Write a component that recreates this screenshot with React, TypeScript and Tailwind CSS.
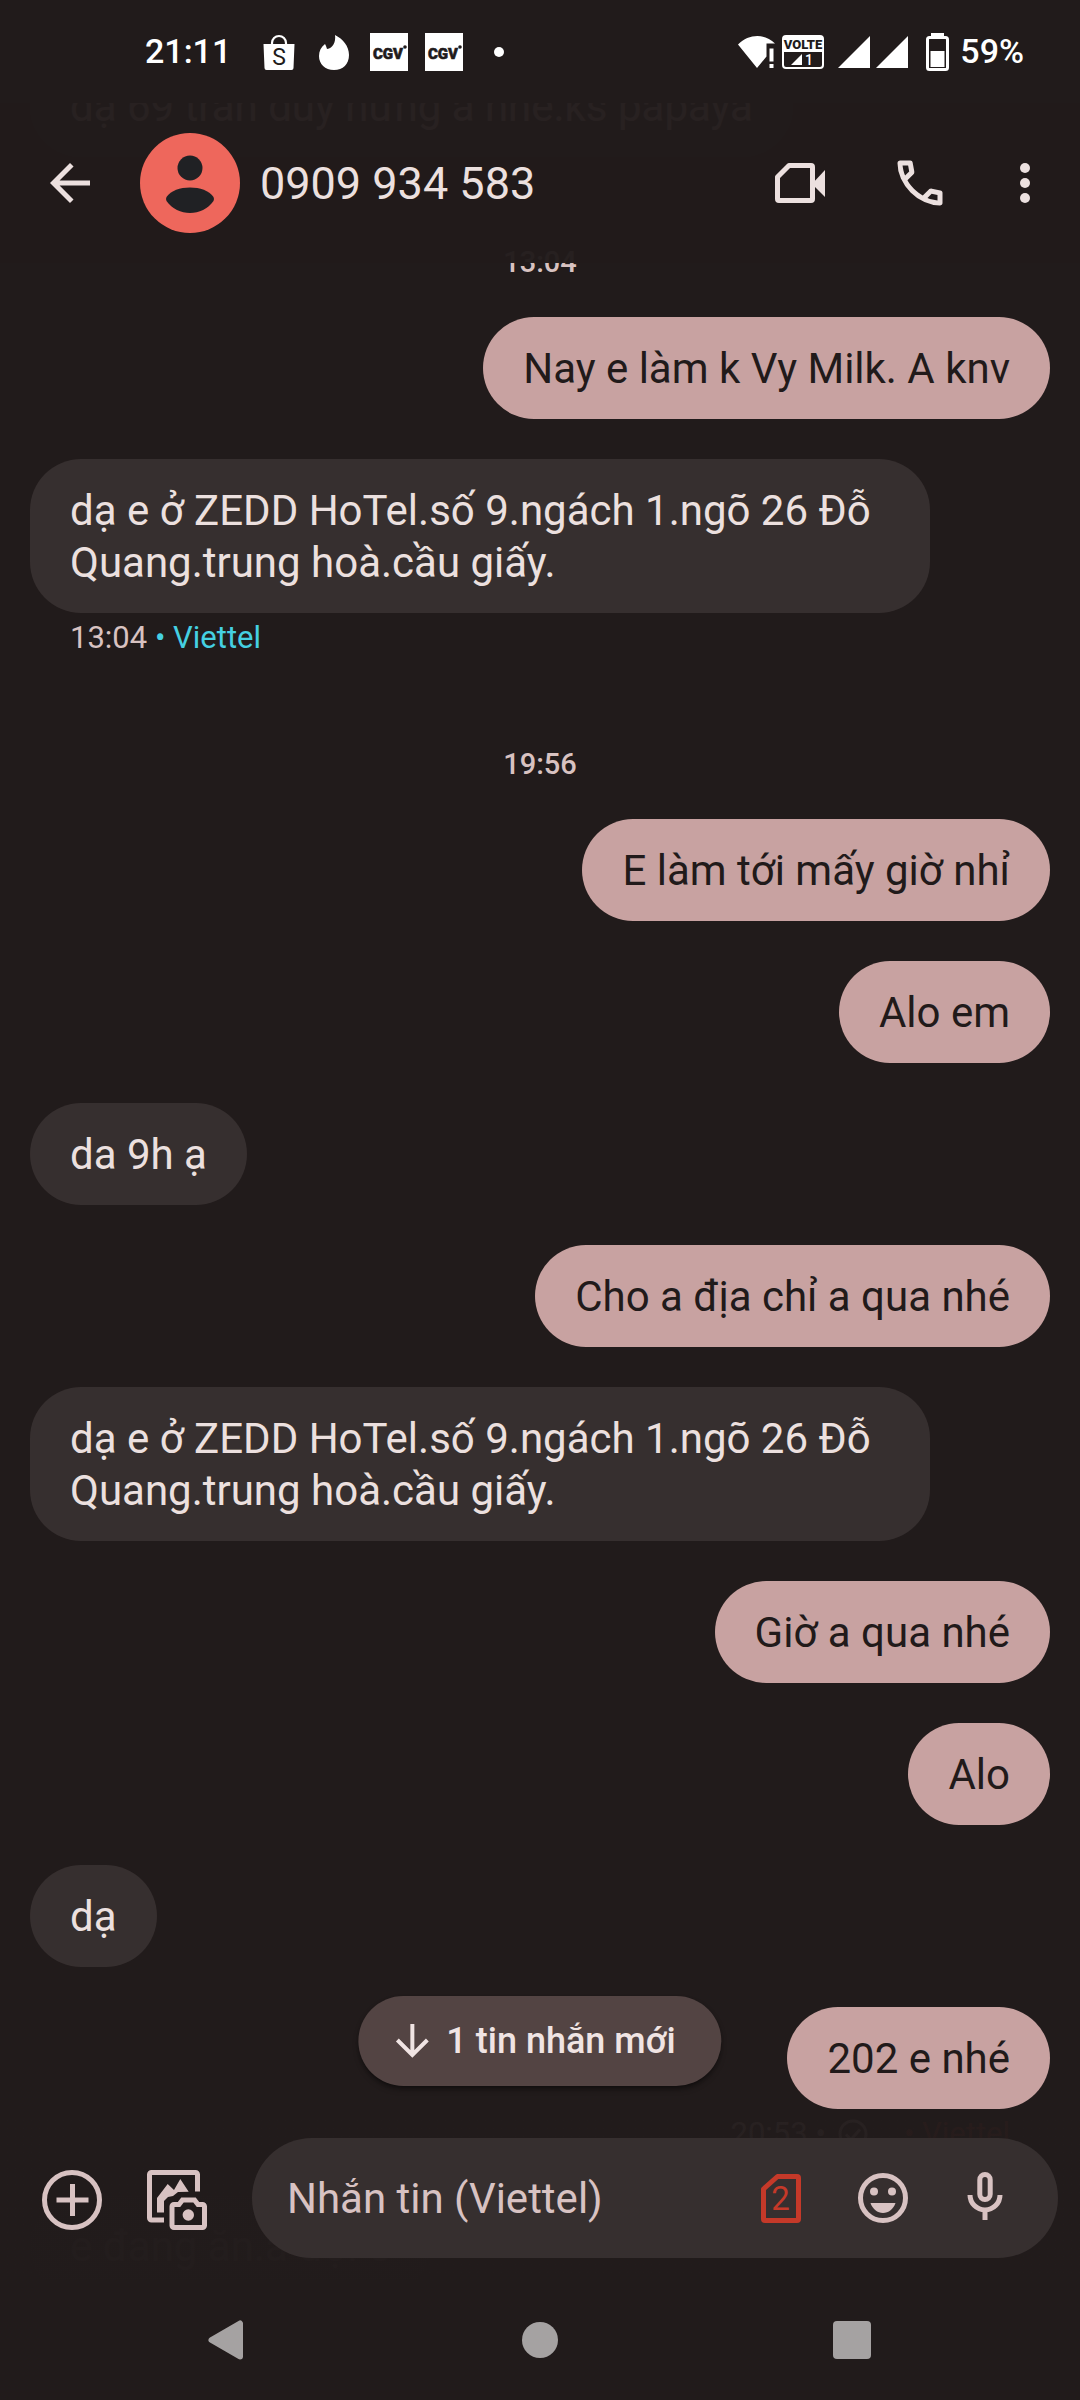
import type { ReactNode } from "react";

type Item =
  | { kind: "in" | "out"; text: string }
  | { kind: "date"; text: string }
  | { kind: "meta"; time: string; sim: string };

const THREAD: Item[] = [
  { kind: "in", text: "dạ 69 trần duy hưng a nhé.ks papaya" },
  { kind: "date", text: "13:04" },
  { kind: "out", text: "Nay e làm k Vy Milk. A knv" },
  { kind: "in", text: "dạ e ở ZEDD HoTel.số 9.ngách 1.ngõ 26 Đỗ Quang.trung hoà.cầu giấy." },
  { kind: "meta", time: "13:04", sim: "Viettel" },
  { kind: "date", text: "19:56" },
  { kind: "out", text: "E làm tới mấy giờ nhỉ" },
  { kind: "out", text: "Alo em" },
  { kind: "in", text: "da 9h ạ" },
  { kind: "out", text: "Cho a địa chỉ a qua nhé" },
  { kind: "in", text: "dạ e ở ZEDD HoTel.số 9.ngách 1.ngõ 26 Đỗ Quang.trung hoà.cầu giấy." },
  { kind: "out", text: "Giờ a qua nhé" },
  { kind: "out", text: "Alo" },
  { kind: "in", text: "dạ" },
  { kind: "out", text: "202 e nhé" },
];

function Bubble({ side, children }: { side: "in" | "out"; children: ReactNode }) {
  const look =
    side === "out"
      ? "self-end bg-[#c8a2a1] text-[#211a1a]"
      : "self-start bg-[#362f2f] text-[#ece0df]";
  return (
    <p className={`max-w-[900px] rounded-[51px] px-10 pt-[26px] pb-6 text-[42px] leading-[52px] ${look}`}>
      {children}
    </p>
  );
}

function Thread() {
  return (
    <main className="-mt-[208px] flex flex-1 flex-col overflow-hidden px-[30px]">
      {THREAD.map((item, i) => {
        if (item.kind === "date") {
          return (
            <p key={i} className="pt-[85px] pb-[35px] text-center text-[29px] leading-10 font-medium text-[#d8c2c1]">
              {item.text}
            </p>
          );
        }
        if (item.kind === "meta") {
          return (
            <p key={i} className="mt-[5px] mb-px px-10 text-[31px] leading-10 text-[#d8c2c1]">
              {item.time} <span className="text-[#45d0e2]">• {item.sim}</span>
            </p>
          );
        }
        // bubbles that follow each other keep a gap, labels bring their own
        const prev = THREAD[i - 1]?.kind;
        const spaced = prev === "in" || prev === "out";
        return (
          <div key={i} className={spaced ? "mt-10 flex flex-col" : "flex flex-col"}>
            <Bubble side={item.kind}>{item.text}</Bubble>
          </div>
        );
      })}

      <p className="mt-[5px] mb-[41px] flex items-center justify-end gap-2 px-10 text-[31px] leading-10 text-[#d8c2c1]">
        20:53 •
        <svg viewBox="0 0 30 30" className="mx-1 h-[30px] w-[30px]" fill="none" stroke="currentColor" strokeWidth="3">
          <circle cx="15" cy="15" r="13" />
          <path d="M8 15.500l5 5 9-10" />
        </svg>
        <span className="ml-6 text-[#c53929]">• Viettel</span>
      </p>
      <Bubble side="in">e đang ăn.a đợi e</Bubble>
    </main>
  );
}

function CgvIcon() {
  return (
    <svg viewBox="0 0 38 38" className="h-[38px] w-[38px]">
      <path d="M0 0h38v38H0z" fill="#fff" />
      <text x="3" y="26" fontSize="15" fontWeight="900" fill="#211b1b" stroke="#211b1b" strokeWidth="0.600">
        CGV
      </text>
      <circle cx="35" cy="14" r="1.800" fill="#211b1b" />
    </svg>
  );
}

function Signal() {
  return (
    <svg viewBox="0 0 32 32" className="h-8 w-8" fill="currentColor">
      <path d="M32 0v32H0z" />
    </svg>
  );
}

function StatusBar() {
  return (
    <div className="z-20 flex h-[103px] shrink-0 items-center justify-between bg-[#211b1b] pr-14 pl-[145px] text-[34px] font-medium text-white">
      <div className="flex items-center gap-[29px]">
        <span>21:11</span>
        <div className="flex items-center gap-[17px]">
          <svg viewBox="0 0 38 38" className="h-[38px] w-[38px]">
            <path d="M12 12v-2a7 7 0 0 1 14 0v2" fill="none" stroke="#fff" strokeWidth="2.200" />
            <path d="M3.500 11h31l-1 24a2 2 0 0 1-2 2h-25a2 2 0 0 1-2-2z" fill="#fff" />
            <text x="19" y="32" textAnchor="middle" fontSize="23" fontWeight="400" fill="#211b1b">
              S
            </text>
          </svg>
          <svg viewBox="0 0 38 38" className="h-[38px] w-[38px]" fill="#fff">
            <path d="M20 2c8 4 14 11 14 20 0 9-6 15-15 15S4 31 4 23c0-5 2-9 6-12 1 2 1.500 3 2 5 6-1 9-7 8-14z" />
          </svg>
          <CgvIcon />
          <CgvIcon />
          <svg viewBox="0 0 38 38" className="h-[38px] w-[38px]" fill="#fff">
            <circle cx="19" cy="19" r="5" />
          </svg>
        </div>
      </div>

      <div className="flex items-center">
        <svg viewBox="0 0 38 34" className="mr-1.5 h-[34px] w-[38px]" fill="#fff">
          <path d="M0 9.500C11-1.500 27-1.500 37 8.500H28.500V21.500L19 33z" />
          <path d="M31.500 13.500h4v13h-4zM31.500 29h4v4h-4z" />
        </svg>
        <svg viewBox="0 0 42 34" className="h-[34px] w-[42px]">
          <rect x="1" y="1" width="40" height="32" rx="3" fill="none" stroke="#fff" strokeWidth="2" />
          <path d="M1 1h40v16H1z" fill="#fff" />
          <text x="21" y="14" textAnchor="middle" fontSize="13" fontWeight="900" fill="#211b1b">
            VOLTE
          </text>
          <path d="M20 19v11H9z" fill="#fff" />
          <text x="23" y="30" fontSize="14" fontWeight="500" fill="#fff">
            1
          </text>
        </svg>
        <div className="mr-[18px] ml-3.5 flex gap-1.5">
          <Signal />
          <Signal />
        </div>
        <svg viewBox="0 0 23 38" className="mr-[11px] h-[38px] w-[23px]">
          <path d="M5 0h13v3H5z" fill="#fff" />
          <rect x="1.500" y="4.500" width="20" height="32" rx="2" fill="none" stroke="#fff" strokeWidth="3" />
          <path d="M4.500 18h14v16h-14z" fill="#fff" />
        </svg>
        <span>59%</span>
      </div>
    </div>
  );
}

function Header() {
  return (
    <header className="z-10 flex h-40 shrink-0 items-center bg-[#211b1b]/97 pr-[25px] pl-10 text-[#ece0df]">
      <button aria-label="Quay lại" className="h-[60px] w-[60px]">
        <svg viewBox="0 0 24 24" fill="currentColor">
          <path d="M20 11H7.830l5.590-5.590L12 4l-8 8 8 8 1.410-1.410L7.830 13H20z" />
        </svg>
      </button>
      <svg viewBox="0 0 100 100" className="ml-10 h-[100px] w-[100px] shrink-0">
        <circle cx="50" cy="50" r="50" fill="#ee675c" />
        <g fill="#202124">
          <circle cx="50" cy="35" r="12.500" />
          <path d="M26.500 64C31 57.500 40 54.500 50 54.500S69 57.500 73.500 64Q74.500 66 73.500 68C68 76 59 80 50 80S32 76 26.500 68Q25.500 66 26.500 64z" />
        </g>
      </svg>
      <h1 className="ml-5 flex-1 text-[45px] leading-none">0909 934 583</h1>
      <button aria-label="Gọi video" className="h-[60px] w-[60px]">
        <svg viewBox="0 0 60 60" fill="currentColor">
          <path
            d="M7.500 24L19 12.500H41a1.500 1.500 0 0 1 1.500 1.500V46a1.500 1.500 0 0 1-1.500 1.500H9A1.500 1.500 0 0 1 7.500 46z"
            fill="none"
            stroke="currentColor"
            strokeWidth="5"
            strokeLinejoin="round"
          />
          <path d="M42 31L55 17v27z" />
        </svg>
      </button>
      <button aria-label="Gọi" className="ml-[60px] h-[60px] w-[60px]">
        <svg viewBox="0 0 24 24" fill="currentColor">
          <path d="M19.950 21q-3.125 0-6.175-1.362t-5.550-3.863T4.363 10.225T3 4.050q0-.45.3-.75t.75-.3H8.100q.35 0 .625.238t.325.562l.65 3.500q.05.4-.025.675T9.400 8.450L6.975 10.900q.5.925 1.187 1.787t1.513 1.663q.775.775 1.625 1.438T13.100 17l2.350-2.350q.225-.225.588-.337t.712-.063l3.450.7q.35.1.575.363T21 15.900v4.050q0 .45-.3.75t-.75.3M6.025 9l1.650-1.650L7.250 5H5.025q.125 1.025.35 2.025T6.025 9m8.950 8.950q.975.425 1.988.675T19 18.950v-2.200l-2.350-.475z" />
        </svg>
      </button>
      <button aria-label="Tuỳ chọn khác" className="ml-[45px] h-[60px] w-[60px]">
        <svg viewBox="0 0 24 24" fill="currentColor">
          <circle cx="12" cy="6" r="2" />
          <circle cx="12" cy="12" r="2" />
          <circle cx="12" cy="18" r="2" />
        </svg>
      </button>
    </header>
  );
}

function Composer() {
  return (
    <div className="relative z-10 -mt-[183px] flex shrink-0 items-center gap-[45px] bg-linear-to-b from-[#211b1b]/96 via-[#211b1b]/99 to-[#211b1b]/99 py-[22px] pr-[22px] pl-[42px] text-[#d8c2c2]">
      <button className="absolute bottom-full left-1/2 mb-[30px] flex h-[90px] -translate-x-1/2 items-center gap-3.5 rounded-full bg-[#534443] pr-[46px] pl-[34px] text-[36px] font-medium whitespace-nowrap text-[#f0e4e3] shadow-md shadow-black/40">
        <svg viewBox="0 0 40 40" className="h-10 w-10" fill="none" stroke="currentColor" strokeWidth="4">
          <path d="M20 3v30M5 19l15 15 15-15" />
        </svg>
        1 tin nhắn mới
      </button>

      <div className="flex shrink-0 gap-[45px] pt-1">
        <button aria-label="Thêm" className="h-[60px] w-[60px]">
          <svg viewBox="0 0 60 60" fill="none" stroke="currentColor" strokeWidth="5">
            <circle cx="30" cy="30" r="27.500" />
            <path d="M14.500 30h32M30.500 14v32" />
          </svg>
        </button>
        <button aria-label="Ảnh" className="h-[60px] w-[60px]">
          <svg viewBox="0 0 60 60" fill="none" stroke="currentColor" strokeWidth="5">
            <path d="M50.500 21.500V4.500a2 2 0 0 0-2-2h-44a2 2 0 0 0-2 2v43.500a2 2 0 0 0 2 2H17" />
            <path
              d="M10 42.500V28l10.700-14 6.300 6L33.300 9l8.400 12.700L31 22l-5 4-5 1-4 4v11.500z"
              fill="currentColor"
              stroke="none"
            />
            <path d="M27 34.500h5l3.500-4.500h12l3.500 4.500h4.500a2 2 0 0 1 2 2v19a2 2 0 0 1-2 2H27a2 2 0 0 1-2-2v-19a2 2 0 0 1 2-2z" />
            <circle cx="41.300" cy="45" r="5.700" fill="currentColor" stroke="none" />
          </svg>
        </button>
      </div>

      <div className="flex h-[120px] min-w-0 flex-1 items-center gap-[42px] rounded-full bg-[#362f2f] pr-[43px] pl-[35px]">
        <input
          type="text"
          aria-label="Nhắn tin"
          placeholder="Nhắn tin (Viettel)"
          className="min-w-0 flex-1 bg-transparent text-[42px] outline-none placeholder:text-[#d8c2c2]"
        />
        <button aria-label="SIM" className="h-[60px] w-[60px] shrink-0 text-[#c53929]">
          <svg viewBox="0 0 60 60">
            <path
              d="M12.500 21L26.500 8.500H46a1.500 1.500 0 0 1 1.500 1.500V51a1.500 1.500 0 0 1-1.500 1.500H14a1.500 1.500 0 0 1-1.500-1.500z"
              fill="none"
              stroke="currentColor"
              strokeWidth="5"
              strokeLinejoin="round"
            />
            <text x="29.500" y="42" textAnchor="middle" fontSize="33" fill="currentColor">
              2
            </text>
          </svg>
        </button>
        <button aria-label="Biểu tượng cảm xúc" className="h-[60px] w-[60px] shrink-0">
          <svg viewBox="0 0 60 60" fill="currentColor">
            <circle cx="30" cy="30" r="22.500" fill="none" stroke="currentColor" strokeWidth="5" />
            <circle cx="21" cy="23.500" r="4" />
            <circle cx="39" cy="23.500" r="4" />
            <path d="M17.500 35h25c-2 6-7 10-12.500 10s-10.500-4-12.500-10z" />
          </svg>
        </button>
        <button aria-label="Ghi âm" className="h-[60px] w-[60px] shrink-0">
          <svg viewBox="0 0 60 60" fill="none" stroke="currentColor" strokeWidth="5">
            <rect x="24.800" y="6.500" width="10.400" height="25" rx="5.200" />
            <path d="M15 27a15 15 0 0 0 30 0M30 42v10" />
          </svg>
        </button>
      </div>
    </div>
  );
}

function NavBar() {
  return (
    <nav className="z-20 flex h-[120px] shrink-0 items-center justify-between bg-[#211b1b] px-[196px] text-[#a5a2a2]">
      <button aria-label="Trở về" className="h-[60px] w-[60px]">
        <svg viewBox="0 0 60 60" fill="currentColor" stroke="currentColor" strokeWidth="6" strokeLinejoin="round">
          <path d="M44 13.500v33L15.500 30z" />
        </svg>
      </button>
      <button aria-label="Màn hình chính" className="h-[60px] w-[60px]">
        <svg viewBox="0 0 60 60" fill="currentColor">
          <circle cx="30" cy="30" r="18" />
        </svg>
      </button>
      <button aria-label="Ứng dụng gần đây" className="h-[60px] w-[60px]">
        <svg viewBox="0 0 60 60" fill="currentColor">
          <rect x="9" y="11" width="38" height="38" rx="4" />
        </svg>
      </button>
    </nav>
  );
}

export default function App() {
  return (
    <div className="flex min-h-screen flex-col bg-[#211b1b] font-[Roboto,'Open_Sans',sans-serif]">
      <StatusBar />
      <Header />
      <Thread />
      <Composer />
      <NavBar />
    </div>
  );
}
